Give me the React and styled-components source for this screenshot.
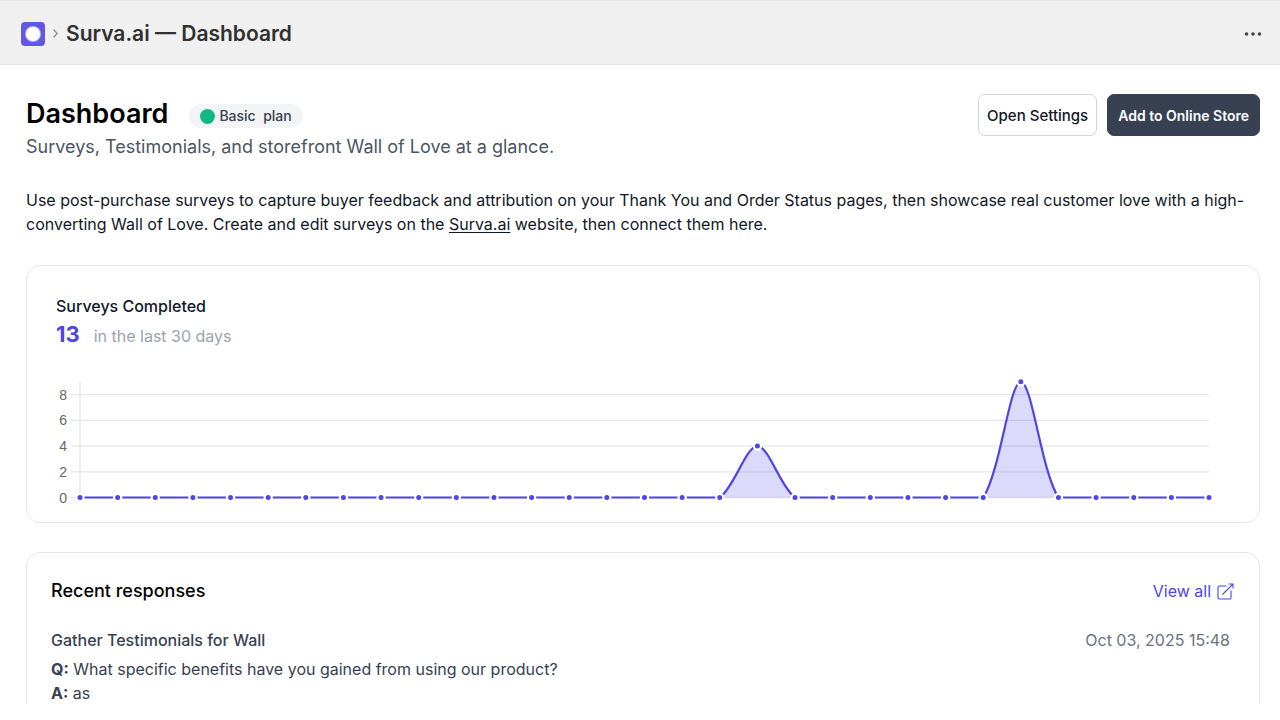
import React from "react";
import styled, { createGlobalStyle } from "styled-components";

const colors = {
  indigo: "#4f46e5",
  slate_900: "#111827",
  slate_700: "#374151",
  slate_600: "#4b5563",
  slate_500: "#6b7280",
  slate_400: "#9ca3af",
  line: "#e5e7eb"
};

const GlobalStyle = createGlobalStyle`
  * {
    box-sizing: border-box;
  }

  body {
    margin: 0;
    background: #fff;
    color: ${colors.slate_900};
    font-family: Inter, "Liberation Sans", sans-serif;
    font-size: 16px;
    line-height: 24px;
  }

  h1, h2, h3, p {
    margin: 0;
  }
`;

const Frame = styled.div`
  height: calc(100vh - 16px);
  overflow: hidden;
`;

const TopBar = styled.header`
  display: flex;
  align-items: center;
  height: 65px;
  padding: 2px 18px 0 21px;
  background: #f0f0f0;
  border-top: 1px solid #e5e5e5;
  border-bottom: 1px solid #e5e5e5;
`;

const Crumb = styled.div`
  flex: 1;
  display: flex;
  align-items: center;
  gap: 8px;
  color: #303030;
  font-size: 21px;
  font-weight: 600;
`;

const Logo = styled.svg`
  width: 24px;
  height: 24px;
`;

const Chevron = styled.svg`
  width: 5px;
  height: 9px;
`;

const MoreButton = styled.button`
  display: flex;
  padding: 0;
  border: none;
  background: transparent;
  cursor: pointer;
`;

const Main = styled.main`
  padding: 29px 20px 28px 26px;
`;

const Header = styled.div`
  display: flex;
  justify-content: space-between;
  align-items: flex-start;
`;

const TitleRow = styled.div`
  display: flex;
  align-items: center;
  gap: 21px;

  h1 {
    color: #000;
    font-size: 27px;
    font-weight: 600;
    line-height: 40px;
  }
`;

const Plan = styled.span`
  display: flex;
  align-items: center;
  gap: 4px;
  margin-top: 4px;
  padding: 0 11px;
  border-radius: 12px;
  background: #f3f4f6;
  color: ${colors.slate_700};
  font-size: 14px;
  font-weight: 500;
  white-space: pre;

  &::before {
    content: "";
    width: 15px;
    height: 15px;
    border-radius: 50%;
    background: #10b981;
  }
`;

const Subtitle = styled.p`
  color: ${colors.slate_600};
  font-size: 18px;
  line-height: 26px;
`;

const Actions = styled.div`
  display: flex;
  gap: 10px;
`;

const Button = styled.button`
  height: 42px;
  padding: 0 ${props => (props.$primary ? 10 : 8)}px;
  border: 1px solid ${props => (props.$primary ? "#374151" : "#d1d5db")};
  border-radius: 7px;
  background: ${props => (props.$primary ? "#374151" : "#fff")};
  color: ${props => (props.$primary ? "#fff" : colors.slate_900)};
  font-family: inherit;
  font-size: ${props => (props.$primary ? 14 : 15)}px;
  font-weight: ${props => (props.$primary ? 600 : 500)};
  cursor: pointer;
`;

const Intro = styled.p`
  margin: 28px 0 29px;

  a {
    color: inherit;
    text-underline-offset: 2px;
  }
`;

const Card = styled.section`
  margin-bottom: 29px;
  padding: ${props => props.$padding};
  border: 1px solid ${colors.line};
  border-radius: 14px;
`;

const CardTitle = styled.h2`
  color: ${props => (props.$large ? "#000" : colors.slate_900)};
  font-size: ${props => (props.$large ? 18 : 16)}px;
  font-weight: 500;
`;

const Total = styled.p`
  display: flex;
  align-items: baseline;
  gap: 14px;
  line-height: 32px;
  color: ${colors.slate_400};

  strong {
    color: ${colors.indigo};
    font-size: 22px;
    font-weight: 700;
  }
`;

const ChartSvg = styled.svg`
  display: block;
  width: 100%;
  margin-top: 23px;
  overflow: visible;

  text {
    fill: #666;
    font-family: "Liberation Sans", Arial, sans-serif;
    font-size: 14px;
  }
`;

const Row = styled.div`
  display: flex;
  justify-content: space-between;
  align-items: center;
`;

const ViewAll = styled.a`
  display: flex;
  align-items: center;
  gap: 6px;
  color: ${colors.indigo};
  text-decoration: none;
`;

const Response = styled.article`
  margin-top: 25px;
  color: ${colors.slate_700};
`;

const ResponseHead = styled(Row)`
  margin-bottom: 5px;
  padding-right: 4px;

  h3 {
    font-size: 16px;
    font-weight: 500;
  }

  time {
    color: ${colors.slate_500};
  }
`;

const data = Array.from({ length: 31 }, (_, i) => {
  if (i === 18) return 4;
  if (i === 25) return 9;
  return 0;
});

const LEFT = 24;
const RIGHT = 1153;
const BASE = 122.5;
const UNIT = 12.85;
const TENSION = 0.3;

const points = data.map((value, i) => ({
  x: LEFT + (i * (RIGHT - LEFT)) / (data.length - 1),
  y: BASE - value * UNIT
}));

const clampY = y => Math.min(BASE, Math.max(BASE - 9 * UNIT, y));

// spline handles, kept inside the plot area so the curve never dips below zero
const handles = points.map((p, i) => {
  const prev = points[i - 1] || p;
  const next = points[i + 1] || p;
  const before = Math.hypot(p.x - prev.x, p.y - prev.y);
  const after = Math.hypot(next.x - p.x, next.y - p.y);
  const a = (TENSION * before) / (before + after);
  const b = (TENSION * after) / (before + after);
  return {
    inX: p.x - a * (next.x - prev.x),
    inY: clampY(p.y - a * (next.y - prev.y)),
    outX: p.x + b * (next.x - prev.x),
    outY: clampY(p.y + b * (next.y - prev.y))
  };
});

const linePath = points
  .map((p, i) => {
    if (i === 0) return `M${p.x} ${p.y}`;
    const from = handles[i - 1];
    const to = handles[i];
    return `C${from.outX} ${from.outY} ${to.inX} ${to.inY} ${p.x} ${p.y}`;
  })
  .join(" ");

const Chart = () => (
  <ChartSvg viewBox="0 0 1174 128" role="img" aria-label="Surveys completed per day">
    {[8, 6, 4, 2, 0].map(tick => (
      <g key={tick}>
        <line
          x1="15"
          x2={RIGHT}
          y1={BASE - tick * UNIT}
          y2={BASE - tick * UNIT}
          stroke="#e6e6e6"
          strokeWidth="1.3"
        />
        <text x="11" y={BASE - tick * UNIT + 5} textAnchor="end">
          {tick}
        </text>
      </g>
    ))}
    <line
      x1={LEFT}
      x2={LEFT}
      y1={BASE - 9 * UNIT}
      y2={BASE}
      stroke="#e6e6e6"
      strokeWidth="1.3"
    />
    <path
      d={`${linePath} L${RIGHT} ${BASE} L${LEFT} ${BASE} Z`}
      fill={colors.indigo}
      fillOpacity="0.2"
    />
    <path d={linePath} fill="none" stroke={colors.indigo} strokeWidth="2.2" />
    {points.map(p => (
      <circle
        key={p.x}
        cx={p.x}
        cy={p.y}
        r="3.6"
        fill={colors.indigo}
        stroke="#fff"
        strokeWidth="2.2"
      />
    ))}
  </ChartSvg>
);

const App = () => {
  return (
    <Frame>
      <GlobalStyle />
      <TopBar>
        <Crumb>
          <Logo viewBox="0 0 24 24">
            <rect width="24" height="24" rx="4" fill="#6257e3" />
            <circle cx="12" cy="12" r="8" fill="#b9b3f3" />
            <circle cx="12" cy="12" r="7" fill="#fff" />
          </Logo>
          <Chevron viewBox="0 0 5 9" fill="none" stroke="#8a8a8a" strokeWidth="1.3">
            <path d="M0.7 0.7 4.2 4.5 0.7 8.3" />
          </Chevron>
          <span>Surva.ai — Dashboard</span>
        </Crumb>
        <MoreButton aria-label="More actions">
          <svg width="18" height="6" viewBox="0 0 18 6" fill="#444">
            <circle cx="2.5" cy="3" r="1.8" />
            <circle cx="9" cy="3" r="1.8" />
            <circle cx="15.5" cy="3" r="1.8" />
          </svg>
        </MoreButton>
      </TopBar>

      <Main>
        <Header>
          <div>
            <TitleRow>
              <h1>Dashboard</h1>
              <Plan>{"Basic  plan"}</Plan>
            </TitleRow>
            <Subtitle>
              Surveys, Testimonials, and storefront Wall of Love at a glance.
            </Subtitle>
          </div>
          <Actions>
            <Button>Open Settings</Button>
            <Button $primary>Add to Online Store</Button>
          </Actions>
        </Header>

        <Intro>
          Use post-purchase surveys to capture buyer feedback and attribution on
          your Thank You and Order Status pages, then showcase real customer
          love with a high-converting Wall of Love. Create and edit surveys on
          the <a href="#surva">Surva.ai</a> website, then connect them here.
        </Intro>

        <Card $padding="28px 29px 19px">
          <CardTitle>Surveys Completed</CardTitle>
          <Total>
            <strong>13</strong>
            <span>in the last 30 days</span>
          </Total>
          <Chart />
        </Card>

        <Card $padding="26px 25px 24px 24px">
          <Row>
            <CardTitle $large>Recent responses</CardTitle>
            <ViewAll href="#responses">
              View all
              <svg
                width="17"
                height="17"
                viewBox="0 0 17 17"
                fill="none"
                stroke="currentColor"
                strokeWidth="1.1"
              >
                <path d="M9.5 3H2.5a1.500 1.500 0 0 0-1.500 1.500V14.500a1.500 1.500 0 0 0 1.500 1.500h10a1.500 1.500 0 0 0 1.500-1.500V7.500" />
                <path d="M11.500 1H16v4.500M16 1 5.500 11.500" />
              </svg>
            </ViewAll>
          </Row>
          <Response>
            <ResponseHead>
              <h3>Gather Testimonials for Wall</h3>
              <time dateTime="2025-10-03T15:48">Oct 03, 2025 15:48</time>
            </ResponseHead>
            <p>
              <strong>Q:</strong> What specific benefits have you gained from
              using our product?
            </p>
            <p>
              <strong>A:</strong> as
            </p>
          </Response>
        </Card>
      </Main>
    </Frame>
  );
};

export default App;
